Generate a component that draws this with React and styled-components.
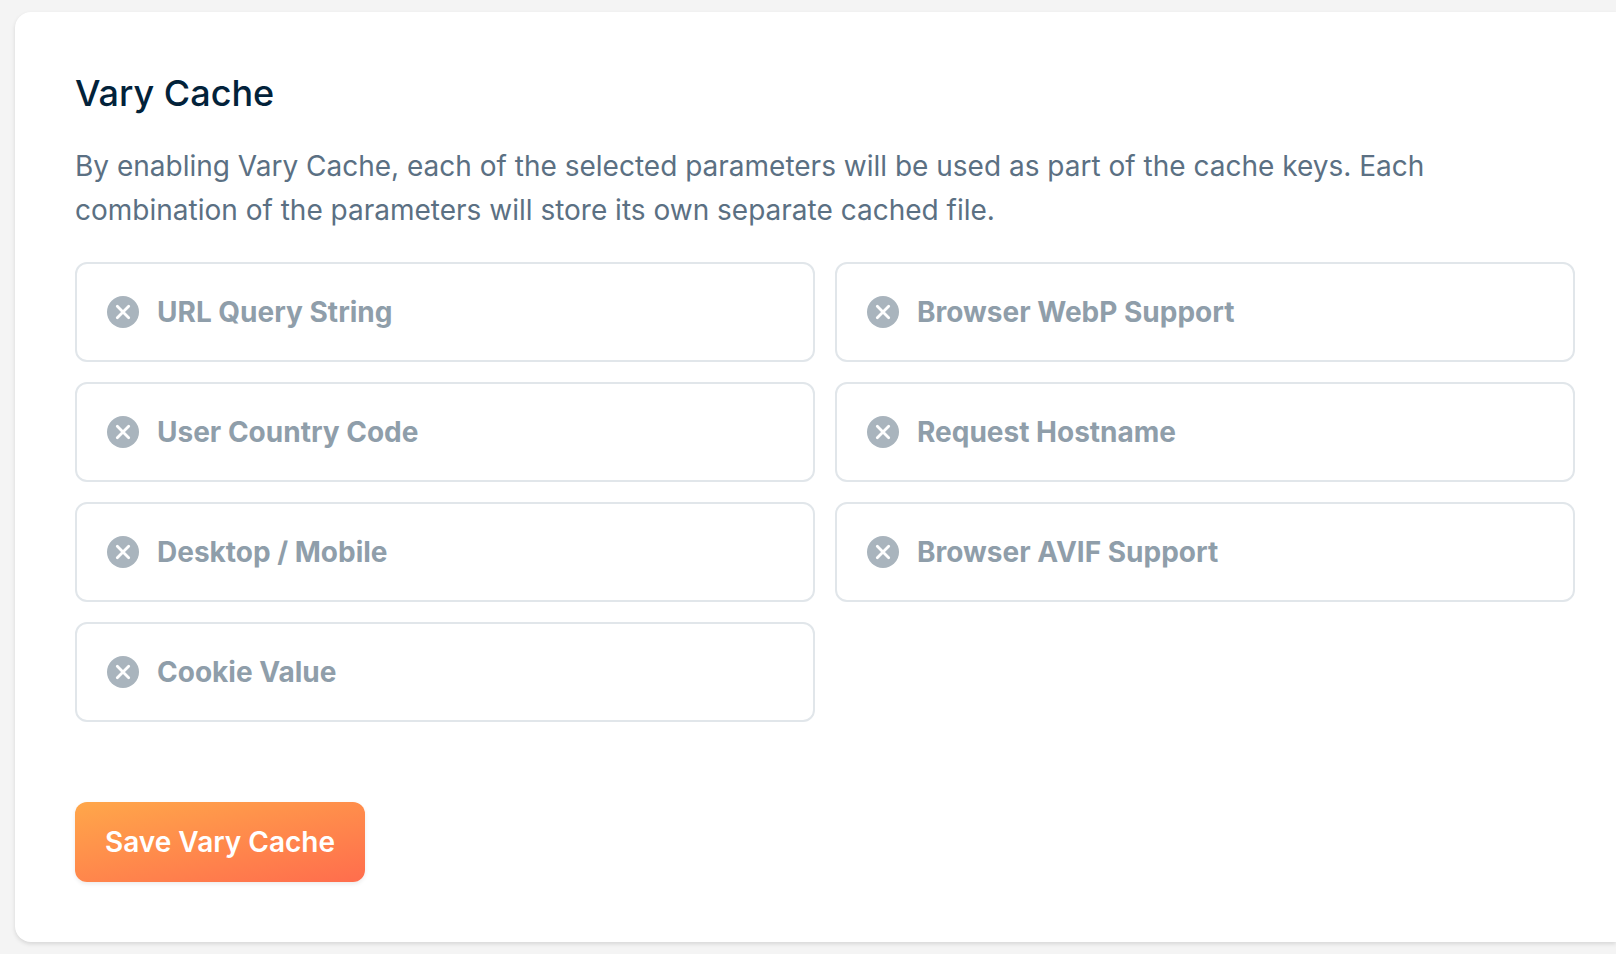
import React, { useState } from "react";
import styled, { createGlobalStyle } from "styled-components";

const parameters = [
  "URL Query String",
  "Browser WebP Support",
  "User Country Code",
  "Request Hostname",
  "Desktop / Mobile",
  "Browser AVIF Support",
  "Cookie Value",
];

const StatusIcon = ({ active }) => (
  <Icon viewBox="0 0 32 32" $active={active} aria-hidden="true">
    <circle cx="16" cy="16" r="16" />
    {active ? (
      <path d="M10 16.5 L14.3 20.8 L22.2 11.5" />
    ) : (
      <path d="M10.3 10.3 L21.7 21.7 M21.7 10.3 L10.3 21.7" />
    )}
  </Icon>
);

export default function App() {
  const [selected, setSelected] = useState([]);

  const toggle = (name) => {
    setSelected(
      selected.includes(name)
        ? selected.filter((item) => item !== name)
        : [...selected, name]
    );
  };

  return (
    <>
      <GlobalStyle />
      <Panel onSubmit={(e) => e.preventDefault()}>
        <Title>Vary Cache</Title>
        <Description>
          By enabling Vary Cache, each of the selected parameters will be used
          as part of the cache keys. Each combination of the parameters will
          store its own separate cached file.
        </Description>
        <OptionGrid>
          {parameters.map((name) => {
            const active = selected.includes(name);
            return (
              <OptionButton
                key={name}
                type="button"
                aria-pressed={active}
                $active={active}
                onClick={() => toggle(name)}
              >
                <StatusIcon active={active} />
                {name}
              </OptionButton>
            );
          })}
        </OptionGrid>
        <SaveButton type="submit">Save Vary Cache</SaveButton>
      </Panel>
    </>
  );
}

const GlobalStyle = createGlobalStyle`
  * {
    box-sizing: border-box;
  }
  body {
    margin: 0;
    padding: 12px 0 12px 15px;
    background: #f4f4f4;
    font-family: Inter, "Liberation Sans", sans-serif;
    -webkit-font-smoothing: antialiased;
  }
  button {
    font: inherit;
    cursor: pointer;
  }
`;

const Panel = styled.form`
  padding: 60px 41px 60px 60px;
  background: #fff;
  border-radius: 16px 0 0 16px;
  box-shadow: 0 2px 4px rgba(0, 0, 0, 0.12);
`;

const Title = styled.h2`
  margin: 0 0 30px;
  color: #02223a;
  font-size: 36px;
  font-weight: 500;
  line-height: 42px;
`;

const Description = styled.p`
  margin: 0 0 30px;
  max-width: 1400px;
  color: #5b7083;
  font-size: 28px;
  line-height: 44px;
`;

const OptionGrid = styled.div`
  display: grid;
  grid-template-columns: repeat(2, 1fr);
  gap: 20px;
  margin-bottom: 80px;
`;

const OptionButton = styled.button`
  display: flex;
  align-items: center;
  gap: 18px;
  padding: 31px 30px;
  border: 2px solid ${(props) => (props.$active ? "#ff7854" : "#e1e6ea")};
  border-radius: 12px;
  background: #fff;
  color: ${(props) => (props.$active ? "#02223a" : "#8f9eaa")};
  && {
    font-size: 28px;
    font-weight: 700;
    line-height: 34px;
  }
`;

const Icon = styled.svg`
  flex: none;
  width: 32px;
  height: 32px;
  circle {
    fill: ${(props) => (props.$active ? "#ff7854" : "#a9b4bd")};
  }
  path {
    fill: none;
    stroke: #fff;
    stroke-width: 2.8;
    stroke-linecap: round;
    stroke-linejoin: round;
  }
`;

const SaveButton = styled.button`
  display: block;
  padding: 20px 30px;
  border: 0;
  border-radius: 12px;
  background: linear-gradient(168deg, #ffa74a, #ff6d4d);
  box-shadow: 0 2px 4px rgba(0, 0, 0, 0.08);
  color: #fff;
  && {
    font-size: 28px;
    font-weight: 600;
    line-height: 40px;
  }
`;
